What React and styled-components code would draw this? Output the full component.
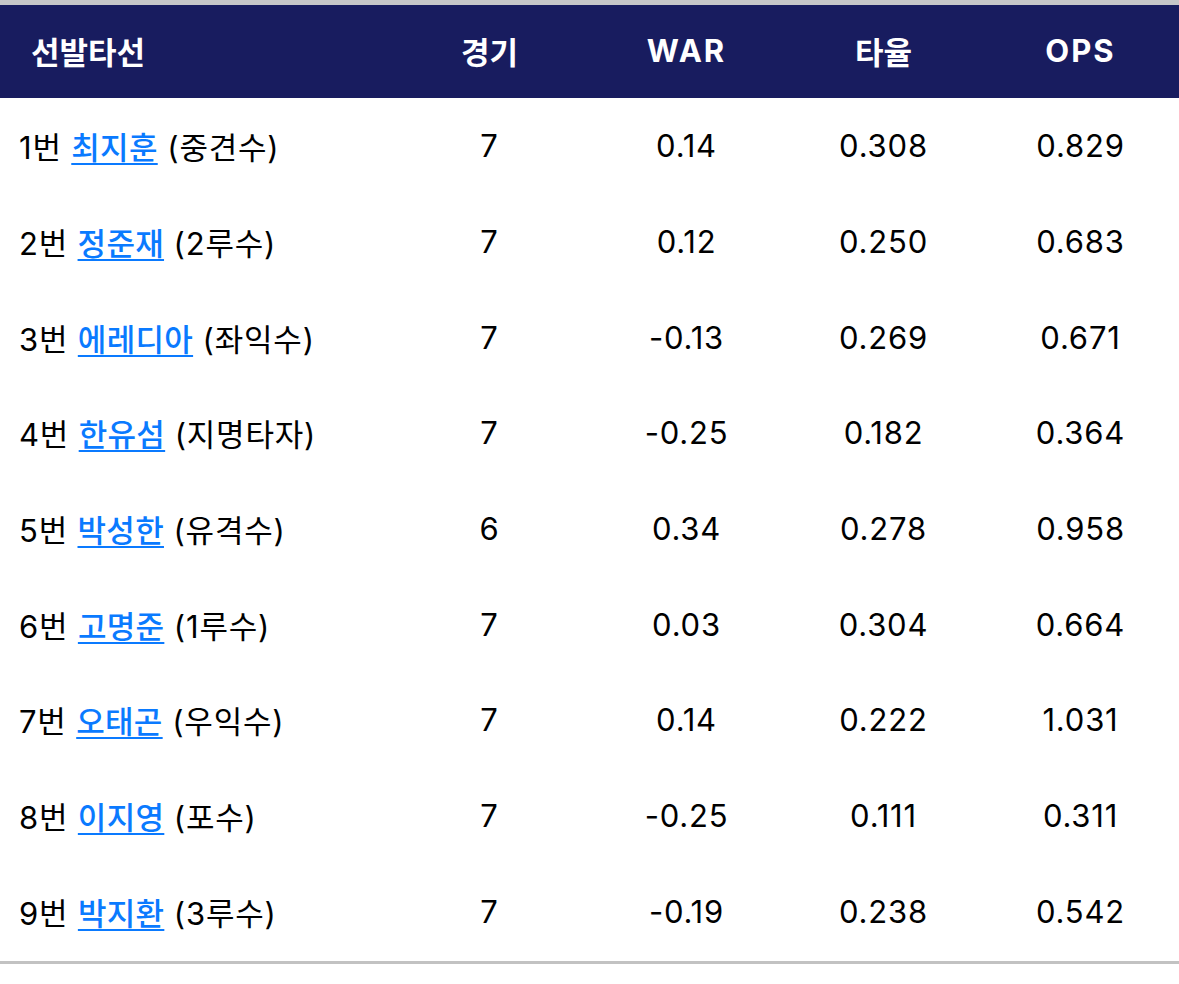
import React from "react";
import styled, { createGlobalStyle } from "styled-components";

const Global = createGlobalStyle`
  html, body { margin: 0; padding: 0; background: #fff; }
  body { font-family: Inter, "Noto Sans CJK KR", sans-serif; }
`;

const Table = styled.div`
  width: 1179px;
  border-top: 5px solid #c6c6c8;
  border-bottom: 3px solid #c2c2c2;
  padding-bottom: 2px;
  font-family: Inter, "Noto Sans CJK KR", sans-serif;
`;

const Grid = styled.div`
  display: grid;
  grid-template-columns: 391px repeat(4, 1fr);
  align-items: center;
  height: ${(p) => p.$h}px;
  background: ${(p) => p.$bg || "transparent"};
  color: ${(p) => p.$fg || "#000"};
`;

const Cell = styled.div`
  text-align: ${(p) => (p.$left ? "left" : "center")};
  padding-left: ${(p) => (p.$left ? p.$pad : 0)}px;
  font-size: 31px;
  font-weight: 400;
  white-space: nowrap;
  letter-spacing: 0.8px;
`;

const HeadCell = styled(Cell)`
  font-weight: 700;
  padding-bottom: 3px;
  letter-spacing: ${(p) => (p.$latin ? "2px" : "0")};
`;

const Player = styled.a`
  color: #0a7aff;
  text-decoration: underline;
  text-decoration-thickness: 2px;
  text-underline-offset: 4px;
  font-weight: 500;
  letter-spacing: 0.3px;
`;

const rows = [
  ["1번", "최지훈", "중견수", "7", "0.14", "0.308", "0.829"],
  ["2번", "정준재", "2루수", "7", "0.12", "0.250", "0.683"],
  ["3번", "에레디아", "좌익수", "7", "-0.13", "0.269", "0.671"],
  ["4번", "한유섬", "지명타자", "7", "-0.25", "0.182", "0.364"],
  ["5번", "박성한", "유격수", "6", "0.34", "0.278", "0.958"],
  ["6번", "고명준", "1루수", "7", "0.03", "0.304", "0.664"],
  ["7번", "오태곤", "우익수", "7", "0.14", "0.222", "1.031"],
  ["8번", "이지영", "포수", "7", "-0.25", "0.111", "0.311"],
  ["9번", "박지환", "3루수", "7", "-0.19", "0.238", "0.542"],
];

export default function App() {
  return (
    <>
      <Global />
      <Table>
        <Grid $h={93} $bg="#181c5f" $fg="#fff">
          <HeadCell $left $pad={31}>선발타선</HeadCell>
          <HeadCell>경기</HeadCell>
          <HeadCell $latin>WAR</HeadCell>
          <HeadCell>타율</HeadCell>
          <HeadCell $latin>OPS</HeadCell>
        </Grid>
        {rows.map((r) => (
          <Grid key={r[0]} $h={95.7}>
            <Cell $left $pad={19}>
              {r[0]} <Player href="#">{r[1]}</Player> ({r[2]})
            </Cell>
            <Cell>{r[3]}</Cell>
            <Cell>{r[4]}</Cell>
            <Cell>{r[5]}</Cell>
            <Cell>{r[6]}</Cell>
          </Grid>
        ))}
      </Table>
    </>
  );
}
